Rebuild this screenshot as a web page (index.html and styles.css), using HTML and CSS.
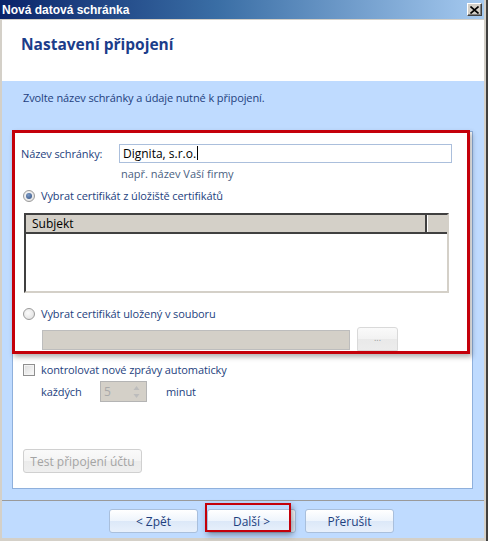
FILE: index.html
```html
<!DOCTYPE html>
<html lang="cs">
<head>
    <meta charset="UTF-8">
    <meta name="viewport" content="width=device-width, initial-scale=1.0">
    <title>Nová datová schránka</title>
    <link rel="stylesheet" href="styles.css">
</head>
<body>
    <div class="window">
        <div class="titlebar">
            <span class="title">Nová datová schránka</span>
            <span class="close">
                <svg width="9" height="8" viewBox="0 0 9 8">
                    <path d="M0.5 0.5 L8.5 7.5 M8.5 0.5 L0.5 7.5" stroke="#000" stroke-width="1.6"/>
                </svg>
            </span>
        </div>

        <div class="client">
            <div class="header">
                <h1>Nastavení připojení</h1>
            </div>

            <div class="content">
                <p class="intro">Zvolte název schránky a údaje nutné k připojení.</p>

                <div class="panel">
                    <div class="highlight">
                        <div class="name-row">
                            <label class="label name-label">Název schránky:</label>
                            <div class="textbox">Dignita, s.r.o.<span class="caret"></span></div>
                        </div>
                        <div class="hint">např. název Vaší firmy</div>

                        <div class="option option-store">
                            <span class="radio checked"></span>
                            <span class="label">Vybrat certifikát z úložiště certifikátů</span>
                        </div>

                        <div class="list">
                            <div class="list-head">
                                <div class="col col-subject">Subjekt</div>
                                <div class="col col-rest"></div>
                            </div>
                        </div>

                        <div class="option option-file">
                            <span class="radio"></span>
                            <span class="label">Vybrat certifikát uložený v souboru</span>
                        </div>

                        <div class="file-row">
                            <div class="file-box"></div>
                            <button class="browse">...</button>
                        </div>
                    </div>

                    <div class="option option-auto">
                        <span class="checkbox"></span>
                        <span class="label">kontrolovat nové zprávy automaticky</span>
                    </div>

                    <div class="interval-row">
                        <span class="label every">každých</span>
                        <div class="spinner">
                            <span class="spin-value">5</span>
                            <span class="spin-arrows">
                                <svg width="7" height="14" viewBox="0 0 7 14">
                                    <path d="M3.5 1 L6.5 5 L0.5 5 Z" fill="#bcbcbc"/>
                                    <path d="M3.5 13 L6.5 9 L0.5 9 Z" fill="#bcbcbc"/>
                                </svg>
                            </span>
                        </div>
                        <span class="label">minut</span>
                    </div>

                    <button class="test">Test připojení účtu</button>
                </div>
            </div>

            <div class="footer">
                <button class="nav">&lt; Zpět</button>
                <div class="next-wrap">
                    <button class="nav">Další &gt;</button>
                    <span class="mark"></span>
                </div>
                <button class="nav">Přerušit</button>
            </div>
        </div>
    </div>
</body>
</html>
```

FILE: styles.css
```css
body {
    margin: 0;
    font-family: 'Open Sans', 'Noto Sans', sans-serif;
    font-size: 11px;
    background-color: #d4d0c8;
}

.window {
    width: 488px;
    height: 541px;
    box-sizing: border-box;
    display: flex;
    flex-direction: column;
    background-color: #d4d0c8;
    border-right: 2px solid #404040;
}

.titlebar {
    height: 19px;
    margin-right: 2px;
    display: flex;
    align-items: center;
    justify-content: space-between;
    background: linear-gradient(to right, #0a246a, #3a6ea5 45%, #a6caf0);
}

.title {
    padding-left: 2px;
    color: #fff;
    font-family: 'Liberation Sans', sans-serif;
    font-weight: bold;
    font-size: 12px;
}

.close {
    width: 15px;
    height: 13px;
    margin-right: 2px;
    box-sizing: border-box;
    display: flex;
    align-items: center;
    justify-content: center;
    background-color: #d4d0c8;
    border: 1px solid;
    border-color: #fff #404040 #404040 #fff;
    box-shadow: inset -1px -1px 0 #808080;
}

.client {
    flex: 1;
    display: flex;
    flex-direction: column;
    margin: 1px 2px 3px 2px;
}

.header {
    height: 61px;
    box-sizing: border-box;
    padding: 13px 0 0 19px;
    background-color: #fff;
}

.header h1 {
    margin: 0;
    font-size: 15.5px;
    line-height: 22px;
    color: #1b3d8a;
}

.content {
    flex: 1;
    padding: 10px 11px 0 10px;
    background-color: #bfdbff;
}

.intro {
    margin: 0;
    padding-left: 11px;
    line-height: 14px;
    letter-spacing: -0.1px;
    color: #1e3f7e;
}

.panel {
    height: 358px;
    box-sizing: border-box;
    margin-top: 26px;
    background-color: #fff;
    border: 1px solid #8fb0dc;
}

.highlight {
    height: 224px;
    box-sizing: border-box;
    margin: -2px 2px 0 -1px;
    padding: 11px 0 0 0;
    border: 3px solid #c4000a;
    box-shadow: 2px 3px 5px rgba(0, 0, 0, 0.3);
}

.label {
    color: #1e3f7e;
    line-height: 16px;
    letter-spacing: -0.1px;
    white-space: nowrap;
}

.name-row {
    display: flex;
    align-items: center;
    padding-left: 6px;
}

.name-label {
    width: 98px;
}

.textbox {
    width: 333px;
    height: 19px;
    box-sizing: border-box;
    padding-left: 3px;
    border: 1px solid #abbfdc;
    font-size: 12px;
    line-height: 17px;
    color: #000;
}

.caret {
    display: inline-block;
    width: 1px;
    height: 14px;
    margin-left: 1px;
    vertical-align: -2px;
    background-color: #000;
}

.hint {
    margin: 4px 0 0 106px;
    line-height: 14px;
    color: #4a5f82;
}

.option {
    display: flex;
    align-items: center;
    height: 16px;
}

.option-store {
    margin-top: 7px;
    padding-left: 8px;
}

.option-file {
    margin-top: 13px;
    padding-left: 8px;
}

.option-auto {
    margin-top: 8px;
    padding-left: 10px;
}

.radio {
    position: relative;
    width: 12px;
    height: 12px;
    box-sizing: border-box;
    margin-right: 6px;
    border: 1px solid #9a9a9a;
    border-radius: 50%;
    background: radial-gradient(circle at 40% 40%, #fbfbfb, #dcdcdc);
}

.radio.checked::after {
    content: "";
    position: absolute;
    left: 2px;
    top: 2px;
    width: 6px;
    height: 6px;
    border-radius: 50%;
    background: radial-gradient(circle at 40% 35%, #7d9bc6, #2e4d80);
}

.checkbox {
    width: 12px;
    height: 12px;
    box-sizing: border-box;
    margin-right: 6px;
    border: 1px solid #8f8f8f;
    background: linear-gradient(135deg, #dcdcdc, #fafafa);
    box-shadow: inset 0 0 0 1px #f4f4f4;
}

.list {
    width: 425px;
    height: 80px;
    box-sizing: border-box;
    margin: 9px 0 0 9px;
    border: 2px solid;
    border-color: #404040 #d4d0c8 #d4d0c8 #404040;
    background-color: #fff;
}

.list-head {
    display: flex;
    height: 17px;
    border-bottom: 2px solid #404040;
    background-color: #d4d0c8;
}

.col {
    height: 17px;
    line-height: 17px;
    font-size: 12px;
    color: #000;
}

.col-subject {
    flex: 1;
    padding-left: 6px;
    border-right: 2px solid #404040;
}

.col-rest {
    width: 19px;
    border-left: 1px solid #fff;
}

.file-row {
    display: flex;
    align-items: flex-start;
    margin-top: 5px;
    padding-left: 27px;
}

.file-box {
    width: 308px;
    height: 20px;
    box-sizing: border-box;
    margin-top: 3px;
    border: 1px solid #bdbdbd;
    background-color: #d4d0c8;
}

.browse {
    width: 41px;
    height: 24px;
    margin-left: 7px;
    padding: 0 0 4px 0;
    border: 1px solid #d9d9d9;
    border-radius: 3px 3px 0 0;
    background: linear-gradient(#fafafa, #f2f2f2 50%, #e9e9e9 51%, #ececec);
    font-family: inherit;
    font-size: 9px;
    color: #9a9a9a;
}

.interval-row {
    display: flex;
    align-items: center;
    margin-top: 3px;
    padding-left: 28px;
}

.every {
    width: 59px;
}

.spinner {
    width: 47px;
    height: 21px;
    box-sizing: border-box;
    display: flex;
    align-items: center;
    justify-content: space-between;
    margin-right: 19px;
    padding: 0 6px 0 3px;
    border: 1px solid #b4b4b4;
    background-color: #d4d0c8;
}

.spin-value {
    font-size: 12px;
    color: #a9a9a9;
}

.spin-arrows svg {
    display: block;
}

.test {
    display: block;
    width: 119px;
    height: 24px;
    margin: 47px 0 0 10px;
    padding: 0;
    border: 1px solid #d0d0d0;
    border-radius: 3px;
    background: linear-gradient(#fafafa, #f4f4f4 50%, #ebebeb 51%, #efefef);
    font-family: inherit;
    font-size: 12px;
    color: #a4a4a4;
}

.footer {
    height: 38px;
    box-sizing: border-box;
    display: flex;
    gap: 9px;
    padding: 8px 0 0 107px;
    border-top: 1px solid #9a9a9a;
    background-color: #bfdbff;
}

.nav {
    width: 89px;
    height: 24px;
    padding: 0;
    border: 1px solid #a9bfdc;
    border-radius: 3px;
    background: linear-gradient(#ffffff, #eef4fc 50%, #dce8f8 51%, #e8f0fb);
    font-family: inherit;
    font-size: 12px;
    color: #1e3f7e;
}

.next-wrap {
    position: relative;
    height: 24px;
}

.mark {
    position: absolute;
    left: -2px;
    top: -6px;
    right: 5px;
    bottom: 1px;
    border: 2px solid #c4000a;
    box-shadow: 2px 3px 6px rgba(0, 0, 0, 0.35);
}
```
